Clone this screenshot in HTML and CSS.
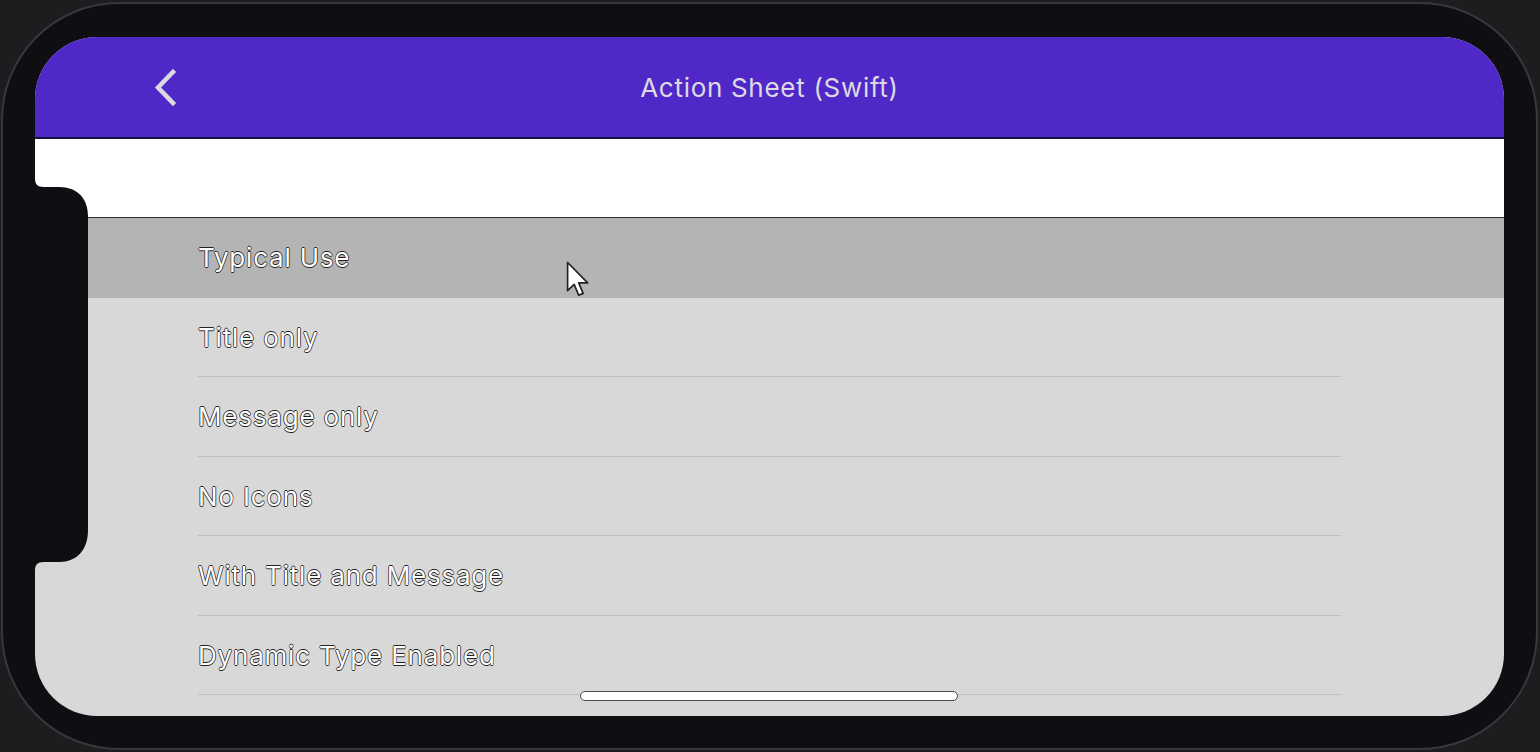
FILE: index.html
```html
<!DOCTYPE html>
<html>
<head>
<meta charset="utf-8">
<link rel="stylesheet" href="styles.css">
</head>
<body>
<div class="device">
  <div class="screen">
    <header class="nav">
      <svg class="back" width="30" height="40" viewBox="0 0 30 40">
        <path d="M22 3 L7 18.5 L22 34" fill="none" stroke="#d9d9df" stroke-width="4.5" stroke-linecap="square"/>
      </svg>
      <h1 class="title">Action Sheet (Swift)</h1>
    </header>
    <div class="spacer"></div>
    <ul class="list">
      <li class="row selected">Typical Use</li>
      <li class="row">Title only</li>
      <li class="row">Message only</li>
      <li class="row">No Icons</li>
      <li class="row">With Title and Message</li>
      <li class="row">Dynamic Type Enabled</li>
    </ul>
    <svg class="notch" width="56" height="400" viewBox="0 0 56 400">
      <path d="M0 0 C0 6 2 9 9 9 L24 9 C42 9 53 20 53 38 L53 352 C53 372 42 384 24 384 L9 384 C2 384 0 387 0 393 Z" fill="#0f0e13"/>
    </svg>
    <div class="home"></div>
    <svg class="cursor" width="26" height="38" viewBox="0 0 17 25">
      <path d="M1 1 L1 19.5 L5.3 15.4 L8.3 22.5 L11.2 21.3 L8.3 14.4 L14.2 14.4 Z" fill="#fff" stroke="#222" stroke-width="1.1" stroke-linejoin="round"/>
    </svg>
  </div>
</div>
</body>
</html>
```

FILE: styles.css
```css
* { box-sizing: border-box; }
html, body {
  margin: 0;
  padding: 0;
}
body {
  width: 1540px;
  height: 752px;
  overflow: hidden;
  background: #1d1d1f;
  font-family: Inter, "Noto Sans", "Liberation Sans", sans-serif;
}
.device {
  margin: 2px 0 0 1px;
  width: 1537px;
  height: 748px;
  border: 2px solid #38383b;
  border-radius: 118px;
  background: #0f0e13;
  padding: 33px 32px 32px 32px;
}
.screen {
  position: relative;
  width: 100%;
  height: 100%;
  border-radius: 62px;
  overflow: hidden;
  background: #d8d8d8;
  display: flex;
  flex-direction: column;
}
.nav {
  flex: 0 0 102px;
  height: 102px;
  background: #5128c8;
  border-bottom: 2px solid #17123a;
  display: flex;
  align-items: center;
  justify-content: center;
  position: relative;
}
.back {
  position: absolute;
  left: 116px;
  top: 32px;
}
.title {
  margin: 0;
  font-weight: 400;
  font-size: 26px;
  color: #dcdae4;
  letter-spacing: 0.7px;
}
.spacer {
  flex: 0 0 79px;
  background: #fff;
  border-bottom: 1px solid #2e2e2e;
}
.list {
  list-style: none;
  margin: 0;
  padding: 0;
}
.row {
  position: relative;
  height: 79.5px;
  display: flex;
  align-items: center;
  padding-left: 163px;
  font-size: 26px;
  letter-spacing: 0.8px;
  color: #fff;
  text-shadow: -0.7px 0 #222, 0.7px 0 #222, 0 -0.7px #222, 0 0.7px #222;
}
.row::after {
  content: "";
  position: absolute;
  left: 163px;
  right: 163px;
  bottom: 0;
  height: 1px;
  background: #bfbfbf;
}
.row.selected {
  background: #b4b4b4;
}
.row.selected::after {
  display: none;
}
.notch {
  position: absolute;
  left: 0;
  top: 141px;
}
.home {
  position: absolute;
  left: 545px;
  bottom: 15px;
  width: 378px;
  height: 10px;
  border-radius: 5px;
  background: #fff;
  border: 1px solid #4a4a4a;
}
.cursor {
  position: absolute;
  left: 531px;
  top: 224px;
}
```
